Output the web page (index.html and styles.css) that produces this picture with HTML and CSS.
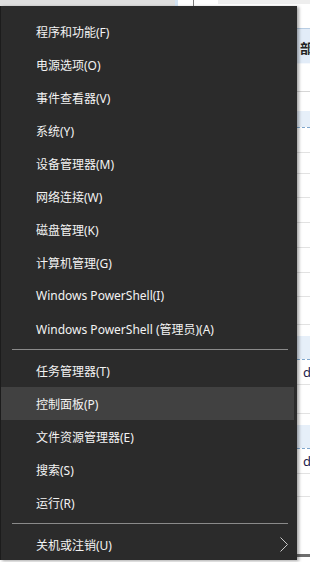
FILE: index.html
```html
<!DOCTYPE html>
<html lang="zh-CN">
<head>
    <meta charset="UTF-8">
    <meta name="viewport" content="width=device-width, initial-scale=1.0">
    <title>Win+X</title>
    <link rel="stylesheet" href="styles.css">
</head>
<body>
    <div class="desktop">
        <div class="topbar">
            <div class="tb-grey"></div>
            <div class="tb-blue"></div>
            <div class="tb-white"></div>
            <div class="tb-rule"></div>
            <div class="tb-white2"></div>
            <div class="tb-light"></div>
        </div>
        <div class="rows">
            <div class="row r22 head-line"></div>
            <div class="row head"><span class="cell-text bold">部</span></div>
            <div class="row r10 plain"></div>
            <div class="row r24 band"></div>
            <div class="row r24"></div>
            <div class="row r20"></div>
            <div class="row r23"></div>
            <div class="row r24"></div>
            <div class="row r24"></div>
            <div class="row r24"></div>
            <div class="row r23"></div>
            <div class="row r27"></div>
            <div class="row r34 band"></div>
            <div class="row r24"><span class="cell-text">d</span></div>
            <div class="row r28"></div>
            <div class="row r34 band"></div>
            <div class="row r24"><span class="cell-text">d</span></div>
            <div class="row r22"></div>
            <div class="row r59 foot"></div>
        </div>
    </div>

    <div class="menu">
        <div class="menu-item">程序和功能(F)</div>
        <div class="menu-item">电源选项(O)</div>
        <div class="menu-item">事件查看器(V)</div>
        <div class="menu-item">系统(Y)</div>
        <div class="menu-item">设备管理器(M)</div>
        <div class="menu-item">网络连接(W)</div>
        <div class="menu-item">磁盘管理(K)</div>
        <div class="menu-item">计算机管理(G)</div>
        <div class="menu-item">Windows PowerShell(I)</div>
        <div class="menu-item">Windows PowerShell (管理员)(A)</div>
        <div class="menu-sep"></div>
        <div class="menu-item">任务管理器(T)</div>
        <div class="menu-item is-hover">控制面板(P)</div>
        <div class="menu-item">文件资源管理器(E)</div>
        <div class="menu-item">搜索(S)</div>
        <div class="menu-item">运行(R)</div>
        <div class="menu-sep"></div>
        <div class="menu-item has-sub">
            <span>关机或注销(U)</span>
            <svg class="chevron" width="8" height="15" viewBox="0 0 8 15" fill="none">
                <path d="M0.5 0.5L7.5 7.5L0.5 14.5" stroke="#c9c9c9" stroke-width="1"/>
            </svg>
        </div>
    </div>
</body>
</html>
```

FILE: styles.css
```css
* {
    margin: 0;
    padding: 0;
    box-sizing: border-box;
}

body {
    width: 310px;
    height: 562px;
    overflow: hidden;
    position: relative;
    background: #ffffff;
    font-family: "Segoe UI", "Noto Sans", "Noto Sans CJK SC", sans-serif;
}

/* window behind the menu */

.desktop {
    display: flex;
    flex-direction: column;
    height: 100%;
}

.topbar {
    display: flex;
    height: 6px;
}

.tb-grey {
    width: 175px;
    background: #dedede;
}

.tb-blue {
    width: 3px;
    background: #d3e3f3;
}

.tb-white {
    width: 15px;
}

.tb-rule {
    width: 1px;
    background: #7d7d7d;
}

.tb-white2 {
    width: 24px;
}

.tb-light {
    flex: 1;
    background: #eeeeee;
    height: 4px;
}

.rows {
    display: flex;
    flex-direction: column;
}

.row {
    display: flex;
    align-items: center;
    border-bottom: 1px solid #e2e2e2;
    background: #ffffff;
}

.r10 { height: 11px; }
.r20 { height: 21px; }
.r22 { height: 23px; }
.r23 { height: 24px; }
.r24 { height: 25px; }
.r27 { height: 28px; }
.r28 { height: 29px; }
.r34 { height: 35px; }
.r59 { height: 60px; }

.head-line {
    border-bottom-color: #b8cde3;
}

.head {
    height: 63px;
    align-items: flex-start;
    background: linear-gradient(180deg, #e2ecf8 0%, #e2ecf8 55%, #ffffff 56%);
    border-bottom-color: #d6d6d6;
}

.band {
    background: linear-gradient(180deg, #ffffff 0%, #ffffff 32%, #e6eff9 33%);
    border-bottom: 1px dashed #7fa6cc;
}

.plain {
    border-bottom: none;
}

.foot {
    border-bottom: 3px solid #6e6e6e;
}

.cell-text {
    padding-left: 303px;
    font-size: 13px;
    color: #1c1c4a;
    white-space: nowrap;
}

.cell-text.bold {
    padding-top: 9px;
    padding-left: 300px;
    font-weight: 700;
    color: #222222;
    font-family: "Noto Sans CJK SC", sans-serif;
}

/* the Win+X menu */

.menu {
    position: absolute;
    left: 0;
    top: 6px;
    width: 297px;
    height: 554px;
    padding-top: 9px;
    background: #2b2b2b;
    border-left: 1px solid #1c1c1c;
    box-shadow: 2px 1px 3px rgba(0, 0, 0, 0.35);
    overflow: hidden;
}

.menu-item {
    display: flex;
    align-items: center;
    justify-content: space-between;
    height: 33px;
    padding-left: 35px;
    margin-right: 3px;
    color: #f3f3f3;
    font-size: 12px;
    white-space: nowrap;
}

.menu-item.is-hover {
    background: #414141;
}

.menu-sep {
    height: 9px;
    display: flex;
    align-items: center;
    padding: 0 9px 0 11px;
}

.menu-sep::before {
    content: "";
    flex: 1;
    height: 1px;
    background: #8a8a8a;
}

.chevron {
    margin-right: 6px;
}
```
